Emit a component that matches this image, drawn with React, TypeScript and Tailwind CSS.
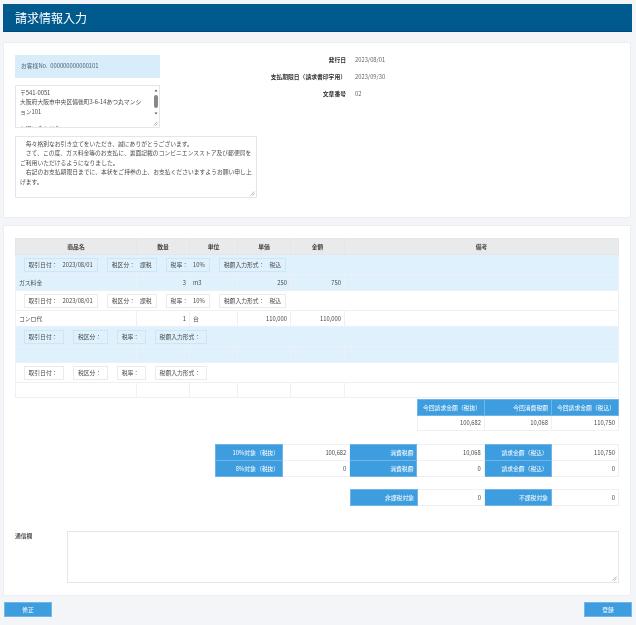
import React from "react";

const font = { fontFamily: '"Noto Sans CJK JP", sans-serif' };

function Pill({ label, value, blue }: { label: string; value?: string; blue: boolean }) {
  return (
    <span
      className={`inline-flex h-[14px] items-center gap-[5px] border pl-[4px] text-[5.8px] leading-none text-[#4a4a4a] ${blue ? "border-[#d0e5f3]" : "border-[#e8ebef]"} ${value ? "pr-[4px]" : "pr-[5.5px]"}`}
    >
      <span>{label}</span>
      {value ? <span>{value}</span> : null}
    </span>
  );
}

function GroupRow({ blue, date, kubun, rate, mode }: { blue: boolean; date?: string; kubun?: string; rate?: string; mode?: string }) {
  return (
    <tr className={`h-[20px] ${blue ? "bg-[#def1fd]" : "bg-white"}`}>
      <td colSpan={6} className="border border-[#eef0f3] px-0 py-0">
        <div className="flex gap-[9px] pl-[7.5px]">
          <Pill blue={blue} label="取引日付：" value={date} />
          <Pill blue={blue} label="税区分：" value={kubun} />
          <Pill blue={blue} label="税率：" value={rate} />
          <Pill blue={blue} label="税額入力形式：" value={mode} />
        </div>
      </td>
    </tr>
  );
}

function ItemRow({ blue, name, qty, unit, price, amount, h = "h-[16px]" }: { blue: boolean; name?: string; qty?: string; unit?: string; price?: string; amount?: string; h?: string }) {
  const c = "border border-[#eef0f3] px-[3px] py-0 text-[5.8px] leading-none text-[#4a4a4a]";
  return (
    <tr className={`${h} ${blue ? "bg-[#def1fd]" : "bg-white"}`}>
      <td className={c}>{name}</td>
      <td className={`${c} text-right`}>{qty}</td>
      <td className={c}>{unit}</td>
      <td className={`${c} text-right`}>{price}</td>
      <td className={`${c} text-right`}>{amount}</td>
      <td className={c}></td>
    </tr>
  );
}

function Head({ children }: { children: React.ReactNode }) {
  return <th className="border border-[#e4e6e9] bg-[#e8eaec] py-0 text-center text-[5.8px] font-bold leading-none text-[#444]">{children}</th>;
}

function Blue({ children }: { children: React.ReactNode }) {
  return <td className="border border-[#6fb5e6] bg-[#3e9ddf] px-[3px] py-0 text-right text-[5.8px] leading-none text-white">{children}</td>;
}

function Num({ children }: { children: React.ReactNode }) {
  return <td className="border border-[#eef0f3] bg-white px-[3px] py-0 text-right text-[5.8px] leading-none text-[#4a4a4a]">{children}</td>;
}

function Grip() {
  return (
    <svg className="absolute bottom-[1px] right-[1px]" width="5" height="5" viewBox="0 0 5 5">
      <path d="M0.5 4.5L4.5 0.5M2.5 4.5L4.5 2.5" stroke="#888" strokeWidth="0.6" />
    </svg>
  );
}

export default function App() {
  return (
    <div className="h-[625px] w-[636px] overflow-hidden bg-[#f3f5f9] blur-[0.3px]" style={font}>
      <div className="ml-[3px] mt-[4px] flex h-[28px] w-[629px] items-center border-b border-[#004a78] bg-[#005a8e] pl-[12px] text-[12px] font-normal text-white">
        請求情報入力
      </div>

      <section className="ml-[3px] mt-[10px] flex h-[176px] w-[628px] rounded-[1px] border border-[#eceef2] bg-white pl-[11px] pt-[8px]">
        <div className="w-[242px] pt-[4px] text-[5.8px] text-[#4a4a4a]">
          <div className="flex h-[23px] w-[145px] items-center bg-[#d9ecfa] pl-[6px] text-[#4a6478]">お客様No.&nbsp;&nbsp;000000000000101</div>
          <div className="relative mt-[7px] h-[43px] w-[145px] overflow-hidden border border-[#e4e6ec] pl-[4px] pr-[13px] pt-[1.5px] leading-[9.6px]">
            <div>〒541-0051</div>
            <div>大阪府大阪市中央区備後町3-6-14あつ丸マンション101</div>
            <div className="mt-[8px]">お問い合わせ先</div>
            <div className="absolute right-0 top-0 flex h-[37px] w-[6px] flex-col items-center bg-white pt-[3px]">
              <svg width="4" height="3" viewBox="0 0 4 3"><path d="M2 0.5L3.5 2.5H0.5Z" fill="#555" /></svg>
              <div className="mt-[3px] h-[13px] w-[3.5px] rounded-full bg-[#888]" />
              <svg className="mt-[4px]" width="4" height="3" viewBox="0 0 4 3"><path d="M2 2.5L3.5 0.5H0.5Z" fill="#555" /></svg>
            </div>
            <Grip />
          </div>
          <div className="relative mt-[8px] h-[62px] w-[242px] border border-[#e4e6ec] px-[4px] pt-[1.5px] leading-[9.6px]">
            <p>　毎々格別なお引き立てをいただき、誠にありがとうございます。</p>
            <p>　さて、この度、ガス料金等のお支払に、裏面記載のコンビニエンスストア及び郵便局をご利用いただけるようになりました。</p>
            <p>　右記のお支払期限日までに、本状をご持参の上、お支払くださいますようお願い申し上げます。</p>
            <Grip />
          </div>
        </div>
        <div className="grid grid-cols-[89px_auto] content-start pt-[1px] text-[5.8px]">
          {[
            ["発行日", "2023/08/01"],
            ["支払期限日（請求書印字用）", "2023/09/30"],
            ["文章番号", "02"],
          ].map(([label, value]) => (
            <React.Fragment key={label}>
              <div className="flex h-[17px] items-center justify-end whitespace-nowrap font-bold text-[#333]">{label}</div>
              <div className="flex h-[17px] items-center pl-[9px] text-[#666]">{value}</div>
            </React.Fragment>
          ))}
        </div>
      </section>

      <section className="ml-[3px] mt-[7px] h-[371px] w-[628px] rounded-[1px] border border-[#eceef2] bg-white pl-[11px] pt-[12px]">
        <table className="w-[604px] table-fixed border-collapse">
          <colgroup>
            <col className="w-[121px]" />
            <col className="w-[53px]" />
            <col className="w-[48px]" />
            <col className="w-[53px]" />
            <col className="w-[54px]" />
            <col />
          </colgroup>
          <thead>
            <tr className="h-[16px]">
              <Head>商品名</Head>
              <Head>数量</Head>
              <Head>単位</Head>
              <Head>単価</Head>
              <Head>金額</Head>
              <Head>備考</Head>
            </tr>
          </thead>
          <tbody>
            <GroupRow blue date="2023/08/01" kubun="課税" rate="10%" mode="税込" />
            <ItemRow blue name="ガス料金" qty="3" unit="m3" price="250" amount="750" />
            <GroupRow blue={false} date="2023/08/01" kubun="課税" rate="10%" mode="税込" />
            <ItemRow blue={false} name="コンロ代" qty="1" unit="台" price="110,000" amount="110,000" />
            <GroupRow blue />
            <ItemRow blue />
            <GroupRow blue={false} />
            <ItemRow blue={false} h="h-[15px]" />
          </tbody>
        </table>

        <table className="ml-[402px] mt-[1px] w-[202px] table-fixed border-collapse">
          <tbody>
            <tr className="h-[16px]">
              <Blue>今回請求金額（税抜）</Blue>
              <Blue>今回消費税額</Blue>
              <Blue>今回請求金額（税込）</Blue>
            </tr>
            <tr className="h-[15px]">
              <Num>100,682</Num>
              <Num>10,068</Num>
              <Num>110,750</Num>
            </tr>
          </tbody>
        </table>

        <table className="ml-[200px] mt-[13px] w-[404px] table-fixed border-collapse">
          <tbody>
            <tr className="h-[16px]">
              <Blue>10%対象（税抜）</Blue>
              <Num>100,682</Num>
              <Blue>消費税額</Blue>
              <Num>10,068</Num>
              <Blue>請求金額（税込）</Blue>
              <Num>110,750</Num>
            </tr>
            <tr className="h-[16px]">
              <Blue>8%対象（税抜）</Blue>
              <Num>0</Num>
              <Blue>消費税額</Blue>
              <Num>0</Num>
              <Blue>請求金額（税込）</Blue>
              <Num>0</Num>
            </tr>
          </tbody>
        </table>

        <table className="ml-[335px] mt-[12px] w-[269px] table-fixed border-collapse">
          <tbody>
            <tr className="h-[16px]">
              <Blue>非課税対象</Blue>
              <Num>0</Num>
              <Blue>不課税対象</Blue>
              <Num>0</Num>
            </tr>
          </tbody>
        </table>

        <div className="mt-[25px] flex">
          <div className="w-[52px] text-[5.8px] font-medium leading-[9px] text-[#444]">通信欄</div>
          <div className="relative h-[52px] w-[552px] border border-[#e4e6ec]">
            <Grip />
          </div>
        </div>
      </section>

      <div className="ml-[4px] mt-[6px] flex w-[628px] justify-between">
        <button className="h-[15px] w-[48px] border border-[#74b6e6] bg-[#3e9ddf] text-[5.8px] leading-none text-white">修正</button>
        <button className="h-[15px] w-[48px] border border-[#74b6e6] bg-[#3e9ddf] text-[5.8px] leading-none text-white">登録</button>
      </div>
    </div>
  );
}
